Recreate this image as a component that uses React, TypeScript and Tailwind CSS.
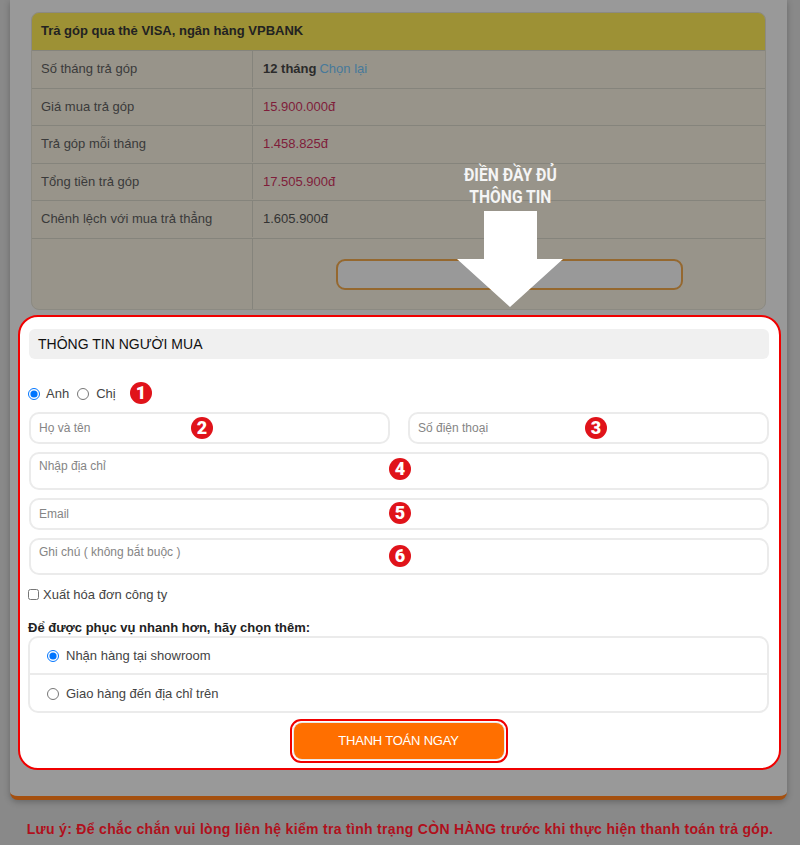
const rows = [
  { label: "Số tháng trả góp", value: "12 tháng", tone: "font-bold text-[#2b2b2b]", link: "Chọn lại" },
  { label: "Giá mua trả góp", value: "15.900.000đ", tone: "text-[#7f1d3a]" },
  { label: "Trả góp mỗi tháng", value: "1.458.825đ", tone: "text-[#7f1d3a]" },
  { label: "Tổng tiền trả góp", value: "17.505.900đ", tone: "text-[#7f1d3a]" },
  { label: "Chênh lệch với mua trả thẳng", value: "1.605.900đ", tone: "text-[#333333]" },
];

function Badge({ n, className }: { n: number; className: string }) {
  return (
    <span className={`absolute flex size-[22px] items-center justify-center rounded-full bg-[#e0131a] font-['Roboto',sans-serif] text-[18px] font-black leading-none text-white ${className}`}>
      {n}
    </span>
  );
}

const field =
  "w-full rounded-[10px] border-2 border-[#ebebeb] bg-white px-[8px] text-xs text-[#333] outline-none placeholder:text-[#858585]";

export default function App() {
  return (
    <div className="relative h-[845px] w-[800px] overflow-hidden bg-[#898989] font-['Liberation_Sans',Arial,sans-serif] text-[13px] text-[#333]">
      {/* khung chính */}
      <div className="mx-[10px] h-[800px] w-[777px] rounded-b-lg border-b-4 border-[#a5500f] bg-[#999999] px-2 pt-3 shadow-[0_2px_6px_rgba(0,0,0,0.25)]">
        <div className="ml-[13px] h-[298px] w-[735px] overflow-hidden rounded-lg border border-[#8c8a82] bg-[#98948a]">
          <div className="flex h-[37px] items-center bg-[#9d9135] pb-px pl-[9px] font-bold text-[#222]">
            Trả góp qua thẻ VISA, ngân hàng VPBANK
          </div>
          {rows.map((row) => (
            <div key={row.label} className="flex h-[37.5px] border-t border-[#85847c] pb-px first:border-t-0">
              <div className="flex w-[221px] items-center border-r border-[#85847c] pl-[9px] text-[#3a3a3a]">{row.label}</div>
              <div className="flex flex-1 items-center gap-[3px] pl-[10px]">
                <span className={row.tone}>{row.value}</span>
                {row.link && <span className="text-[#47799a]">{row.link}</span>}
              </div>
            </div>
          ))}
          <div className="flex h-[72px] border-t border-[#85847c]">
            <div className="w-[221px] border-r border-[#85847c]" />
            <div className="flex-1 pl-[83px] pt-[20px]">
              <div className="h-[31px] w-[347px] rounded-[9px] border-2 border-[#95682f] bg-[#999999]" />
            </div>
          </div>
        </div>

        {/* form người mua */}
        <div className="mt-[5px] h-[455px] w-[763px] rounded-[20px] border-2 border-[#f00000] bg-white pl-[9px] pr-[10px] pt-3">
          <div className="flex h-[30px] items-center rounded-md bg-[#f0f0f0] pl-[9px] text-sm text-[#111]">
            THÔNG TIN NGƯỜI MUA
          </div>

          <div className="relative -ml-px mt-[23px] flex h-[22px] items-center pt-px text-[#444]">
            <input type="radio" name="gender" defaultChecked className="m-0 size-3 accent-[#0075ff]" />
            <span className="ml-[6px]">Anh</span>
            <input type="radio" name="gender" className="m-0 ml-[8px] size-3" />
            <span className="ml-[7px]">Chị</span>
            <Badge n={1} className="left-[102px] top-0" />
          </div>

          <div className="mt-[8px] flex gap-[18px]">
            <div className="relative flex-1">
              <input className={`${field} h-[32px]`} placeholder="Họ và tên" />
              <Badge n={2} className="left-[162px] top-[5px]" />
            </div>
            <div className="relative flex-1">
              <input className={`${field} h-[32px]`} placeholder="Số điện thoại" />
              <Badge n={3} className="left-[177px] top-[5px]" />
            </div>
          </div>

          <div className="relative mt-[8px]">
            <textarea className={`${field} block h-[38px] resize-none pt-[4px]`} placeholder="Nhập địa chỉ" />
            <Badge n={4} className="left-[360px] top-[6px]" />
          </div>
          <div className="relative mt-[8px]">
            <input className={`${field} block h-[32px]`} placeholder="Email" />
            <Badge n={5} className="left-[360px] top-[4px]" />
          </div>
          <div className="relative mt-[8px]">
            <textarea className={`${field} block h-[37px] resize-none pt-[4px]`} placeholder="Ghi chú ( không bắt buộc )" />
            <Badge n={6} className="left-[360px] top-[7px]" />
          </div>

          <label className="-ml-px mt-[12px] flex h-[15px] items-center text-[#444]">
            <input type="checkbox" className="m-0 size-[11px]" />
            <span className="ml-[4px]">Xuất hóa đơn công ty</span>
          </label>

          <div className="-ml-px mt-[18px] font-bold leading-[15px] text-[#222]">Để được phục vụ nhanh hơn, hãy chọn thêm:</div>
          <div className="-ml-px mt-[1px] h-[77px] rounded-[10px] border-2 border-[#ebebeb] text-[#444]">
            <label className="flex h-[37px] items-center border-b-2 border-[#ebebeb] pl-[17px]">
              <input type="radio" name="ship" defaultChecked className="m-0 size-3 accent-[#0075ff]" />
              <span className="ml-[7px]">Nhận hàng tại showroom</span>
            </label>
            <label className="flex h-[36px] items-center pl-[17px] pt-px">
              <input type="radio" name="ship" className="m-0 size-3" />
              <span className="ml-[7px]">Giao hàng đến địa chỉ trên</span>
            </label>
          </div>

          <div className="mt-[6px] flex justify-center">
            <div className="ml-[-1px] rounded-[11px] border-2 border-[#f00000] p-[2px]">
              <button className="h-[36px] w-[210px] rounded-lg bg-[#ff6f00] text-[13px] tracking-[-0.2px] text-white ring-1 ring-[#e8e8e8]">
                THANH TOÁN NGAY
              </button>
            </div>
          </div>
        </div>
      </div>

      <div className="mt-[21px] text-center text-sm font-bold leading-4 tracking-[0.31px] text-[#b0101c]">
        Lưu ý: Để chắc chắn vui lòng liên hệ kiểm tra tình trạng CÒN HÀNG trước khi thực hiện thanh toán trả góp.
      </div>

      {/* mũi tên chú thích */}
      <div className="absolute left-[450px] top-[164px] flex w-[120px] flex-col items-center">
        <div className="origin-center scale-x-[0.87] whitespace-nowrap text-center font-['Roboto',sans-serif] text-[18px] font-bold leading-[22px] text-[#f5f5f5]">
          ĐIỀN ĐẦY ĐỦ
          <br />
          THÔNG TIN
        </div>
        <svg width="106" height="96" viewBox="0 0 106 96" className="mt-[3px]">
          <path d="M27 0H80V48H106L53 96L0 48H27Z" fill="#fff" />
        </svg>
      </div>
    </div>
  );
}
